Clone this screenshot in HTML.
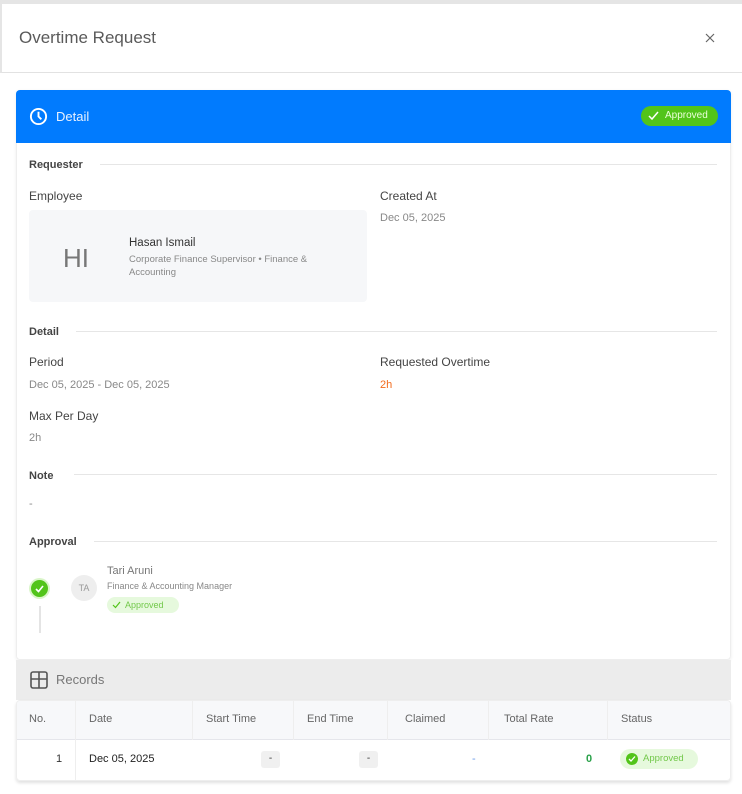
<!DOCTYPE html>
<html><head><meta charset="utf-8"><style>
*{box-sizing:border-box;margin:0;padding:0}
body{width:742px;height:794px;background:#fff;font-family:"Liberation Sans",sans-serif;position:relative;overflow:hidden;color:#333}
.a{position:absolute;white-space:nowrap}
.lbl{font-size:12px;color:#444}
.sec{font-size:11px;font-weight:bold;color:#444}
.line{position:absolute;height:1px;background:#e6e6e6}
.val{font-size:11px;color:#888}
</style></head><body>
<div class="a" style="left:0;top:0;width:742px;height:4px;background:#e5e5e5"></div>
<div class="a" style="left:0;top:4px;width:742px;height:69px;border-left:2px solid #e5e5e5;border-bottom:1px solid #e2e2e2"></div>
<div class="a" style="left:19px;top:28px;font-size:17px;color:#5a5a5a">Overtime Request</div>
<svg class="a" style="left:705px;top:33px" width="10" height="10" viewBox="0 0 10 10"><path d="M1 1l8 8M9 1l-8 8" stroke="#666" stroke-width="1.2"/></svg>

<div class="a" style="left:16px;top:90px;width:715px;height:570px;border:1px solid #eee;border-radius:4px;box-shadow:0 1px 3px rgba(0,0,0,.08)"></div>
<div class="a" style="left:16px;top:90px;width:715px;height:53px;background:#017bfe;border-radius:4px 4px 0 0"></div>
<svg class="a" style="left:29px;top:107px" width="19" height="19" viewBox="0 0 20 20"><circle cx="10" cy="10" r="8" fill="none" stroke="#fff" stroke-width="2"/><path d="M10 5v5l3 3" fill="none" stroke="#fff" stroke-width="2"/></svg>
<div class="a" style="left:56px;top:109px;font-size:13px;color:#e8f1ff">Detail</div>
<div class="a" style="left:641px;top:106px;width:77px;height:20px;background:#52c41a;border-radius:10px;color:#eaffd8;font-size:10px;line-height:20px;padding-left:24px">Approved</div>
<svg class="a" style="left:648px;top:111px" width="11" height="10" viewBox="0 0 11 10"><path d="M1 5l3 3 6-7" fill="none" stroke="#fff" stroke-width="1.5"/></svg>

<div class="a sec" style="left:29px;top:159px">Requester</div><div class="line" style="left:100px;top:164px;width:617px"></div>
<div class="a lbl" style="left:29px;top:189px">Employee</div>
<div class="a" style="left:29px;top:210px;width:338px;height:92px;background:#f6f7f9;border-radius:4px"></div>
<div class="a" style="left:63px;top:243px;font-size:26px;color:#777;font-weight:300">HI</div>
<div class="a" style="left:129px;top:237px;font-size:11.5px;color:#333">Hasan Ismail</div>
<div class="a" style="left:129px;top:253px;font-size:9.5px;color:#888;line-height:13px">Corporate Finance Supervisor • Finance &amp;<br>Accounting</div>
<div class="a lbl" style="left:380px;top:189px">Created At</div>
<div class="a val" style="left:380px;top:212px">Dec 05, 2025</div>

<div class="a sec" style="left:29px;top:326px">Detail</div><div class="line" style="left:76px;top:331px;width:641px"></div>
<div class="a lbl" style="left:29px;top:355px">Period</div>
<div class="a val" style="left:29px;top:379px">Dec 05, 2025 - Dec 05, 2025</div>
<div class="a lbl" style="left:380px;top:355px">Requested Overtime</div>
<div class="a" style="left:380px;top:379px;font-size:11px;color:#f26b1d">2h</div>
<div class="a lbl" style="left:29px;top:409px">Max Per Day</div>
<div class="a val" style="left:29px;top:432px">2h</div>

<div class="a sec" style="left:29px;top:470px">Note</div><div class="line" style="left:74px;top:474px;width:643px"></div>
<div class="a val" style="left:29px;top:498px">-</div>

<div class="a sec" style="left:29px;top:536px">Approval</div><div class="line" style="left:94px;top:541px;width:623px"></div>
<div class="a" style="left:31px;top:580px;width:17px;height:17px;border-radius:50%;background:#52c41a;box-shadow:0 0 0 2px #d9f5c8"></div>
<svg class="a" style="left:34px;top:583px" width="11" height="11" viewBox="0 0 11 11"><path d="M2 6l2.5 2.5L9 3" fill="none" stroke="#fff" stroke-width="1.6"/></svg>
<div class="a" style="left:39px;top:606px;width:2px;height:27px;background:#e4e4e4"></div>
<div class="a" style="left:71px;top:575px;width:26px;height:26px;border-radius:50%;background:#eee;color:#999;font-size:9px;text-align:center;line-height:26px">TA</div>
<div class="a" style="left:107px;top:565px;font-size:11px;color:#777">Tari Aruni</div>
<div class="a" style="left:107px;top:581px;font-size:9px;color:#888">Finance &amp; Accounting Manager</div>
<div class="a" style="left:107px;top:597px;width:72px;height:16px;background:#e6f9dd;border-radius:8px;color:#72c84a;font-size:9px;line-height:16px;padding-left:18px">Approved</div>
<svg class="a" style="left:112px;top:601px" width="9" height="8" viewBox="0 0 9 8"><path d="M1 4l2.5 2.5L8 1" fill="none" stroke="#52c41a" stroke-width="1.2"/></svg>

<div class="a" style="left:16px;top:660px;width:715px;height:40px;background:#ececec"></div>
<svg class="a" style="left:30px;top:671px" width="18" height="18" viewBox="0 0 18 18"><rect x="1" y="1" width="16" height="16" rx="2" fill="none" stroke="#555" stroke-width="1.6"/><path d="M1 8h16M9 1v16" stroke="#555" stroke-width="1.6"/></svg>
<div class="a" style="left:56px;top:672px;font-size:13px;color:#777">Records</div>

<div class="a" style="left:16px;top:700px;width:715px;height:81px;border:1px solid #eee;border-radius:4px;box-shadow:0 2px 3px rgba(0,0,0,.12);overflow:hidden">
<div style="height:39px;background:#f7f8fa;border-bottom:1px solid #e5e6eb;position:relative">
<div class="a" style="left:58px;top:0;width:1px;height:80px;background:#eee"></div>
<div class="a" style="left:175px;top:0;width:1px;height:39px;background:#eee"></div>
<div class="a" style="left:276px;top:0;width:1px;height:39px;background:#eee"></div>
<div class="a" style="left:370px;top:0;width:1px;height:39px;background:#eee"></div>
<div class="a" style="left:471px;top:0;width:1px;height:39px;background:#eee"></div>
<div class="a" style="left:590px;top:0;width:1px;height:39px;background:#eee"></div>
</div>
</div>
<div class="a" style="left:29px;top:713px;font-size:11px;color:#666">No.</div>
<div class="a" style="left:89px;top:713px;font-size:11px;color:#666">Date</div>
<div class="a" style="left:206px;top:713px;font-size:11px;color:#666">Start Time</div>
<div class="a" style="left:307px;top:713px;font-size:11px;color:#666">End Time</div>
<div class="a" style="left:405px;top:713px;font-size:11px;color:#666">Claimed</div>
<div class="a" style="left:504px;top:713px;font-size:11px;color:#666">Total Rate</div>
<div class="a" style="left:621px;top:713px;font-size:11px;color:#666">Status</div>
<div class="a" style="left:56px;top:753px;font-size:11px;color:#333">1</div>
<div class="a" style="left:89px;top:753px;font-size:11px;color:#222">Dec 05, 2025</div>
<div class="a" style="left:261px;top:751px;width:19px;height:17px;background:#f0f0f0;border-radius:3px;font-size:10px;text-align:center;line-height:16px">-</div>
<div class="a" style="left:359px;top:751px;width:19px;height:17px;background:#f0f0f0;border-radius:3px;font-size:10px;text-align:center;line-height:16px">-</div>
<div class="a" style="left:472px;top:753px;font-size:11px;color:#6a9be8">-</div>
<div class="a" style="left:586px;top:753px;font-size:11px;color:#2aa14a;font-weight:bold">0</div>
<div class="a" style="left:620px;top:749px;width:78px;height:20px;background:#e6f9dd;border-radius:10px;color:#72c84a;font-size:9.5px;line-height:20px;padding-left:23px">Approved</div>
<div class="a" style="left:626px;top:753px;width:12px;height:12px;border-radius:50%;background:#52c41a"></div>
<svg class="a" style="left:628px;top:755px" width="8" height="8" viewBox="0 0 8 8"><path d="M1 4l2 2 4-4.5" fill="none" stroke="#fff" stroke-width="1.3"/></svg>
</body></html>
